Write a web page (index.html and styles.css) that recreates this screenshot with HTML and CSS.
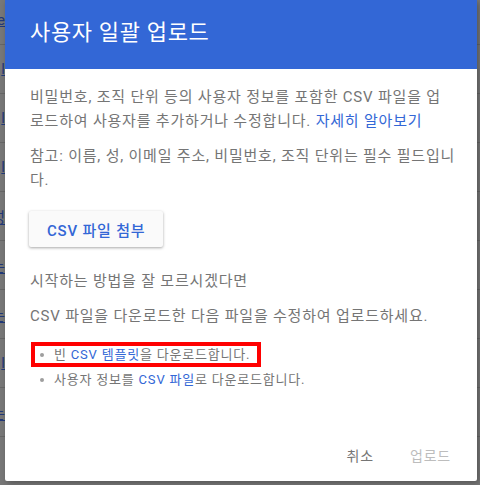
FILE: index.html
```html
<!DOCTYPE html>
<html lang="ko">
<head>
    <meta charset="utf-8">
    <link rel="stylesheet" href="styles.css">
</head>
<body>

    <div class="page">
        <div class="row"><span>e</span></div>
        <div class="row"><span>l</span></div>
        <div class="row"><span>l</span></div>
        <div class="row"><span>l</span></div>
        <div class="row"><span>성</span></div>
        <div class="row"><span>는</span></div>
        <div class="row"><span>는</span></div>
        <div class="row"><span>l</span></div>
        <div class="row"><span>는</span></div>
        <div class="row"><span></span></div>
    </div>

    <div class="dialog">
        <header class="dialog-head">
            <h1>사용자 일괄 업로드</h1>
        </header>

        <section class="dialog-body">
            <p class="intro">비밀번호, 조직 단위 등의 사용자 정보를 포함한 CSV 파일을 업로드하여 사용자를 추가하거나 수정합니다. <a href="#">자세히 알아보기</a></p>
            <p>참고: 이름, 성, 이메일 주소, 비밀번호, 조직 단위는 필수 필드입니다.</p>

            <button class="attach">CSV 파일 첨부</button>

            <p class="hint">시작하는 방법을 잘 모르시겠다면</p>
            <p>CSV 파일을 다운로드한 다음 파일을 수정하여 업로드하세요.</p>

            <ul class="steps">
                <li class="marked">빈&nbsp;<a href="#">CSV 템플릿</a>을 다운로드합니다.</li>
                <li>사용자 정보를&nbsp;<a href="#">CSV 파일</a>로 다운로드합니다.</li>
            </ul>
        </section>

        <footer class="dialog-foot">
            <button class="flat">취소</button>
            <button class="flat" disabled>업로드</button>
        </footer>
    </div>

</body>
</html>
```

FILE: styles.css
```css
body {
    margin: 0;
    width: 480px;
    height: 485px;
    overflow: hidden;
    background-color: #787878;
    font-family: Roboto, "Noto Sans CJK KR", sans-serif;
    position: relative;
}

/* page behind the scrim */
.page {
    margin-top: -4px;
}

.row {
    height: 48px;
    border-bottom: 1px solid #676767;
    display: flex;
    align-items: center;
}

.row span {
    width: 5px;
    overflow: hidden;
    display: flex;
    justify-content: flex-end;
    color: #22397a;
    font-size: 15px;
    text-decoration: underline;
}

/* dialog */
.dialog {
    position: absolute;
    left: 5px;
    top: 0;
    width: 472px;
    height: 481px;
    background-color: white;
    border-radius: 0 0 2px 2px;
    box-shadow: 2px 2px 6px rgba(0, 0, 0, 0.3);
    display: flex;
    flex-direction: column;
    letter-spacing: 0.05em;
}

.dialog-head {
    height: 69px;
    background-color: #3367d6;
    padding: 0 25px 10px;
    box-sizing: border-box;
    display: flex;
    align-items: center;
}

.dialog-head h1 {
    margin: 0;
    color: white;
    font-size: 22px;
    font-weight: 400;
    letter-spacing: 0.03em;
}

.dialog-body {
    flex: 1;
    padding: 16px 6px 0 25px;
    color: #757575;
    font-size: 15px;
    line-height: 24px;
}

.dialog-body p {
    margin: 0 0 11px;
}

.dialog-body .intro {
    max-width: 418px;
}

.dialog-body a {
    color: #3367d6;
    text-decoration: none;
}

.attach {
    margin: 8px 0 22px -1px;
    height: 36px;
    padding: 0 18px;
    border: none;
    border-radius: 2px;
    background-color: #fafafa;
    box-shadow: 0 1px 3px rgba(0, 0, 0, 0.35);
    color: #3367d6;
    font-family: inherit;
    font-size: 15px;
    font-weight: 500;
    letter-spacing: inherit;
}

.hint {
    margin-bottom: 10px;
}

.steps {
    list-style: none;
    margin: 14px 0 0;
    padding: 0 0 0 1px;
    font-size: 13px;
    line-height: 17px;
}

.steps li {
    height: 25px;
    box-sizing: border-box;
    display: flex;
    align-items: center;
    padding-left: 9px;
}

.steps li::before {
    content: "";
    width: 4px;
    height: 4px;
    border-radius: 50%;
    background-color: #9e9e9e;
    margin-right: 10px;
}

.steps li.marked {
    width: fit-content;
    border: 4px solid #ff0000;
    padding: 0 7px 0 5px;
}

.dialog-foot {
    height: 52px;
    display: flex;
    justify-content: flex-end;
    align-items: center;
    gap: 36px;
    padding-right: 26px;
}

.flat {
    border: none;
    background: none;
    padding: 0;
    font-family: inherit;
    font-size: 14px;
    letter-spacing: inherit;
    color: #757575;
}

.flat:disabled {
    color: #bdbdbd;
}
```
